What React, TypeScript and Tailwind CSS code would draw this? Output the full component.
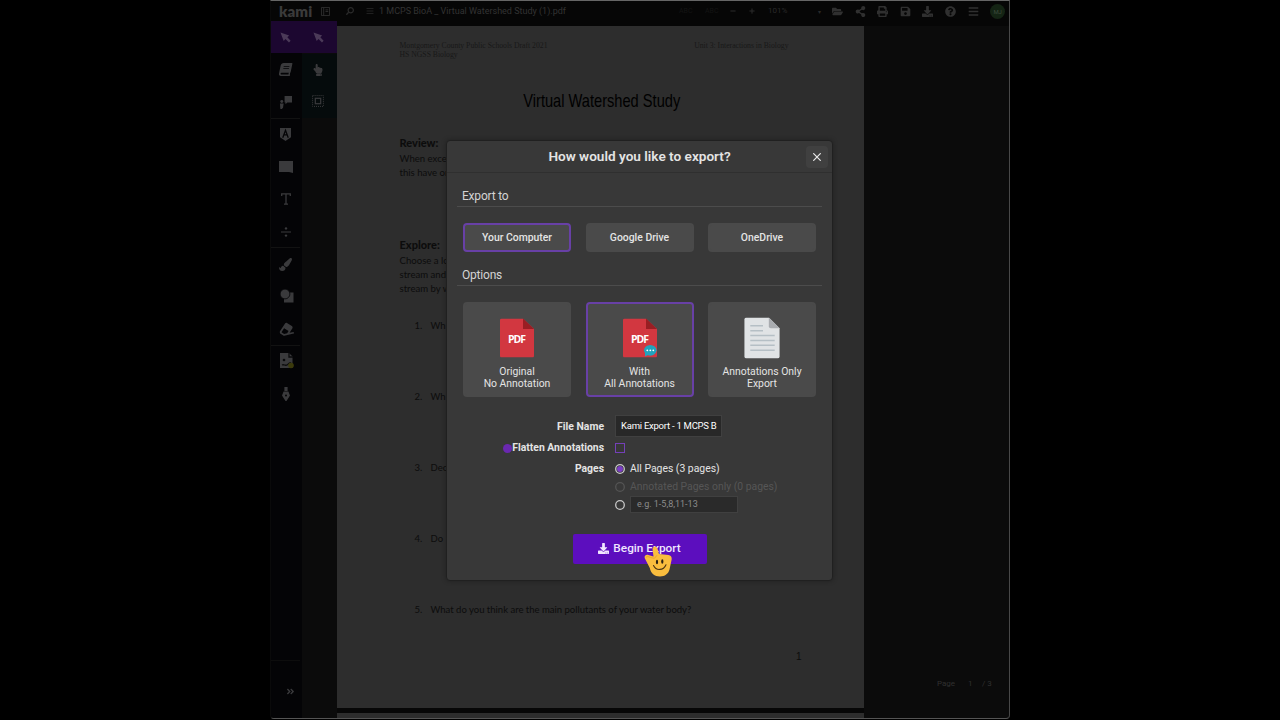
import React from "react";
import { FaShareAlt, FaPrint, FaSave, FaDownload, FaQuestionCircle, FaBars, FaFolderOpen, FaHandPointUp, FaBook, FaPaintBrush, FaEraser, FaAngleDoubleRight, FaMinus, FaPlus, FaSearch } from "react-icons/fa";

const Pointer: React.FC = () => (
 <svg viewBox="0 0 12 12" className="w-[11px] h-[11px]" fill="currentColor">
  <path d="M0.5 0.5 L10 3.8 L8 5.6 L11.6 9.6 L9.8 11.4 L6 7.6 L4 9.8 Z" />
 </svg>
);

const Comment: React.FC = () => (
 <svg viewBox="0 0 14 16" className="w-[13px] h-[15px]" fill="currentColor">
  <path d="M6 1h8v7H9l-2 2V8H6z" />
  <circle cx="3" cy="7" r="1.6" />
  <path d="M1 9h4l-.6 4-1.2 2H1.5z" />
 </svg>
);

const Markup: React.FC = () => (
 <svg viewBox="0 0 12 14" className="w-[11px] h-[13px]">
  <path d="M0 0h12v10l-6 4-6-4z" fill="currentColor" />
  <path d="M3 10.5 L6 2.5 L9 10.5 M4.2 7.5h3.6" stroke="#040406" strokeWidth="1.4" fill="none" />
 </svg>
);

const Note: React.FC = () => (
 <svg viewBox="0 0 14 12" className="w-[14px] h-3" fill="currentColor">
  <path d="M0 0h14v12l-4-1H0z" />
 </svg>
);

const TextTool: React.FC = () => (
 <svg viewBox="0 0 10 12" className="w-[10px] h-3" fill="none" stroke="currentColor" strokeWidth="1.3">
  <path d="M.7 3V.8h8.6V3M5 .8v10.4M3 11.2h4" />
 </svg>
);

const Equation: React.FC = () => (
 <svg viewBox="0 0 10 10" className="w-[10px] h-[10px]" fill="currentColor">
  <path d="M0 4.4h10v1.2H0z" />
  <circle cx="5" cy="1.4" r="1.2" />
  <circle cx="5" cy="8.6" r="1.2" />
 </svg>
);

const Shapes: React.FC = () => (
 <svg viewBox="0 0 14 14" className="w-[14px] h-[14px] translate-x-px" fill="currentColor">
  <path d="M9 3.5h4.5v10H4V9z" />
  <circle cx="5" cy="5" r="4.9" stroke="#040406" strokeWidth=".8" />
 </svg>
);

const Picture: React.FC = () => (
 <svg viewBox="0 0 14 16" className="w-[14px] h-4 translate-x-px">
  <path d="M0 0h9l3.5 3.5V15H0z" fill="currentColor" />
  <path d="M9 0v4h4M2 12c2-1 3 1 5 0s2-3 4-2" stroke="#0a0a0b" fill="none" strokeWidth="1.3" />
  <circle cx="4" cy="7" r="1.3" fill="#0a0a0b" />
  <circle cx="11" cy="12.5" r="2.8" fill="#3b3a0c" />
 </svg>
);

const Pen: React.FC = () => (
 <svg viewBox="0 0 8 14" className="w-2 h-[14px]" fill="currentColor">
  <path d="M2.4 0h3.2v4H2.4zM1.6 4.6h4.8L8 8.5 4.5 14h-1L0 8.5z" />
  <circle cx="4" cy="8.6" r="1" fill="#040406" />
 </svg>
);

const Marquee: React.FC = () => (
 <svg viewBox="0 0 12 12" className="w-3 h-3" fill="none" stroke="currentColor">
  <rect x=".6" y=".6" width="10.8" height="10.8" strokeDasharray="1 1" />
  <rect x="3.3" y="3.3" width="5.4" height="5.4" strokeWidth="1.2" />
 </svg>
);

const tools = [
 {icon: <FaBook size={13} className="-skew-x-12" />, rule: false},
 {icon: <Comment />, rule: true},
 {icon: <Markup />, rule: false},
 {icon: <Note />, rule: false},
 {icon: <TextTool />, rule: false},
 {icon: <Equation />, rule: true},
 {icon: <FaPaintBrush size={13} />, rule: false},
 {icon: <Shapes />, rule: false},
 {icon: <FaEraser size={14} className="-rotate-12" />, rule: true},
 {icon: <Picture />, rule: false},
 {icon: <Pen />, rule: false},
];

const actions = [FaFolderOpen, FaShareAlt, FaPrint, FaSave, FaDownload, FaQuestionCircle, FaBars];

const questions = [
 "Wh",
 "Wh",
 "Dec",
 "Do",
 "What do you think are the main pollutants of your water body?",
];

const TopBar: React.FC = () => (
 <header className="flex items-center h-[25px] pl-2 pb-[5px] bg-[#060606] text-[#303030] shrink-0">
  <span className="w-[34px] text-[15px] leading-none font-extrabold font-['Lato'] tracking-[0.1px] text-[#3a3a3a]">kami</span>
  <svg viewBox="0 0 10 10" className="w-[9px] h-[9px] ml-2" fill="none" stroke="currentColor">
   <path d="M.5 .5h9v9h-9zM3 .5v9M5 3.2h3M5 5h3" />
  </svg>
  <FaSearch size={8} className="ml-[16px] -scale-x-100 text-[#2a2a2a]" />
  <FaBars size={8} className="ml-3 text-[#202020]" />
  <span className="ml-[5px] w-[190px] whitespace-pre text-[9px] leading-none text-[#333]">1 MCPS BioA _ Virtual Watershed Study (1).pdf</span>
  <div className="flex items-center ml-[110px] w-[142px] text-[#2a2a2a]">
   <span className="w-[26px] text-[7px] text-[#141414]">ABC</span>
   <span className="w-[25px] text-[7px] text-[#141414]">ABC</span>
   <FaMinus size={6} />
   <FaPlus size={6} className="ml-[13px]" />
   <span className="ml-[13px] text-[8px]">101%</span>
   <span className="ml-auto text-[6px]">▾</span>
  </div>
  <div className="flex items-center ml-[11px] gap-[11.6px]">
   {actions.map((Icon, index) => (
    <Icon key={index} size={11} />
   ))}
   <span className="flex items-center justify-center w-[15px] h-[15px] rounded-full bg-[#142414] text-[6px] text-[#3d4a3d]">MJ</span>
  </div>
 </header>
);

const Sidebar: React.FC = () => (
 <aside className="flex w-[66px] shrink-0 text-[#3a3a3c]">
  <div className="flex flex-col w-[31px] pr-[2px] bg-[#040406]">
   <div className="flex items-center justify-center h-8 -mt-[5px] mb-px -mr-[2px] pr-[2px] bg-[#1c0730] text-[#4b3a58]"><Pointer /></div>
   {tools.map((tool, index) => (
    <div key={index} className={`flex items-center justify-center h-[32.4px] border-b ${tool.rule ? "border-[#121212]" : "border-transparent"}`}>
     {tool.icon}
    </div>
   ))}
   <div className="mt-auto flex items-center justify-center h-[43px] pl-2.5 pb-[14px] box-content border-t border-[#0d0d0d]">
    <FaAngleDoubleRight size={9} className="mt-[17px]" />
   </div>
  </div>
  <div className="flex flex-col w-[35px] bg-[#0b0b0b]">
   <div className="flex items-center justify-center h-8 -mt-[5px] mb-px pr-[3px] bg-[#1c0730] text-[#4b3a58]"><Pointer /></div>
   <div className="flex flex-col items-center h-[64px] bg-[#050b0c] pr-[3px]">
    <div className="flex items-center h-8"><FaHandPointUp size={12} /></div>
    <div className="flex items-center h-8 pb-0.5"><Marquee /></div>
   </div>
  </div>
 </aside>
);

const Document: React.FC = () => (
 <div className="flex flex-col w-[527px] shrink-0">
  <article className="h-[682px] bg-[#2d2d2d] px-[62.5px] font-['Lato',sans-serif] text-[#0c0c0c]">
   <div className="flex justify-between pt-[15px] pr-[13px] font-['Liberation_Serif',serif] text-[7.7px] leading-[9px] text-[#181818]">
    <p>Montgomery County Public Schools Draft 2021<br />HS NGSS Biology</p>
    <p className="whitespace-nowrap">Unit 3: Interactions in Biology</p>
   </div>
   <h1 className="mt-[30px] pl-0.5 text-center text-[19px] leading-6 whitespace-nowrap scale-x-[.77] font-['Liberation_Sans',sans-serif] text-black">Virtual Watershed Study</h1>
   <h2 className="mt-[23px] text-[11px] leading-[14px] font-black">Review:</h2>
   <p className="mt-[2px] text-[9.6px] leading-[14.3px]">When exce<br />this have or</p>
   <h2 className="mt-[57px] text-[11px] leading-[14px] font-black">Explore:</h2>
   <p className="mt-[2px] text-[9.6px] leading-[14.3px]">Choose a lo<br />stream and<br />stream by w</p>
   <ol className="mt-[23px] pl-[15px] text-[9.5px]">
    {questions.map((question, index) => (
     <li key={index} className="flex h-[71px] leading-[14px]">
      <span className="w-4">{index + 1}.</span>
      <span className="whitespace-nowrap">{question}</span>
     </li>
    ))}
   </ol>
   <p className="-mt-6 text-right text-[10px] leading-[14px] font-['Liberation_Sans',sans-serif]">1</p>
  </article>
  <div className="h-[5px] bg-[#070707]" />
  <div className="grow bg-[#2d2d2d]" />
 </div>
);

const PdfIcon: React.FC<{annotated?: boolean}> = ({annotated}) => (
 <svg viewBox="0 0 34 39" className="w-[34px] h-[39px]">
  <path d="M1.5 0H23l11 10.5V37.5a1.5 1.5 0 0 1-1.5 1.5h-31A1.5 1.5 0 0 1 0 37.5v-36A1.5 1.5 0 0 1 1.5 0z" fill="#d23740" />
  <path d="M23 0l11 10.5H23z" fill="#991e23" />
  <text x="17" y="24.4" textAnchor="middle" fontSize="10.5" fontWeight="700" fontFamily="Open Sans, sans-serif" fill="#fff" textLength="18">PDF</text>
  {annotated && (
   <>
    <ellipse cx="27.3" cy="31.8" rx="6.3" ry="5.4" fill="#22a3bd" />
    <path d="M22 34v4l4-2z" fill="#22a3bd" />
    <g fill="#fff">
     <circle cx="24.3" cy="31.8" r=".9" />
     <circle cx="27.3" cy="31.8" r=".9" />
     <circle cx="30.3" cy="31.8" r=".9" />
    </g>
   </>
  )}
 </svg>
);

const NotesIcon: React.FC = () => (
 <svg viewBox="0 0 36 42" className="w-9 h-[41px]">
  <path d="M2 0h23l11 11v29a2 2 0 0 1-2 2H2a2 2 0 0 1-2-2V2a2 2 0 0 1 2-2z" fill="#e0e3e5" />
  <path d="M25 0l11 11H27a2 2 0 0 1-2-2z" fill="#a9acb0" />
  <path d="M6 8.5h13M6 13.5h13M6 18.5h25M6 23.5h25M6 28.5h25M6 33.5h25" stroke="#b5bfc5" strokeWidth="1.5" />
 </svg>
);

const targets = ["Your Computer", "Google Drive", "OneDrive"];

const options = [
 {icon: <PdfIcon />, lines: ["Original", "No Annotation"]},
 {icon: <PdfIcon annotated />, lines: ["With", "All Annotations"]},
 {icon: <NotesIcon />, lines: ["Annotations Only", "Export"]},
];

const Radio: React.FC<{checked?: boolean; disabled?: boolean}> = ({checked, disabled}) => (
 <svg viewBox="0 0 10 10" className="w-[10px] h-[10px] shrink-0">
  <circle cx="5" cy="5" r="4.3" fill="none" strokeWidth="1.3" stroke={disabled ? "#545454" : "#c8c8c8"} />
  {checked && <circle cx="5" cy="5" r="3" fill="#7a3cc4" />}
 </svg>
);

const HandCursor: React.FC = () => (
 <svg viewBox="0 0 28 32" className="absolute left-[197px] top-[404px] w-7 h-8">
  <path d="M8.5 4C8.8 1 12 .6 13 3L15 9l9.5 1.1c2.8.3 3.6 2.7 3 5.2l-2 9.3C24.4 29 21 31.5 16 31.5c-5.5 0-9.3-3.5-10.2-8.5L.9 13.4C-.2 10.8 2 9 4.4 10l5.1 1.6z" fill="#f9bd3e" />
  <path d="M2 12.5c1-1.5 2.5-.8 4.4 0l4 .8 2.6-3" stroke="#eda32a" fill="none" />
  <ellipse cx="13" cy="17" rx="1.1" ry="2.2" fill="#2b2113" />
  <ellipse cx="18.3" cy="16.5" rx="1.1" ry="2.2" fill="#2b2113" />
  <path d="M9.5 20.5c2.5 5.5 10 5.2 12.5-.8" stroke="#4a3413" strokeWidth="1.1" fill="none" strokeLinecap="round" />
 </svg>
);

const ExportDialog: React.FC = () => (
 <section className="absolute left-[446px] top-[140px] w-[387px] h-[441px] rounded-[4px] border border-[#202020] bg-[#383838] text-[#e4e4e4] shadow-[0_0_5px_rgba(0,0,0,0.3)]">
  <header className="relative flex items-center justify-center h-8 border-b border-[#2f2f2f]">
   <h2 className="text-[13.6px] font-semibold whitespace-nowrap">How would you like to export?</h2>
   <button className="absolute right-1 top-[5px] flex items-center justify-center w-[22px] h-[22px] rounded bg-[#404040]">
    <svg viewBox="0 0 8 8" className="w-2 h-2" stroke="#e8e8e8" strokeWidth="1.2"><path d="M.3 .3l7.4 7.4M7.7 .3L.3 7.7" /></svg>
   </button>
  </header>
  <div className="px-[10px]">
   <h3 className="h-[34px] pt-[14px] pl-[5px] border-b border-[#4c4c4c] text-[12px] leading-[18px] tracking-[-0.2px] text-[#d4d4d4]">Export to</h3>
   <div className="flex justify-between mt-4 px-[6px]">
    {targets.map((target, index) => (
     <button
      key={target}
      className={`flex items-center justify-center w-[108px] h-[29px] rounded-[4px] border-2 bg-[#4a4a4a] text-[10.4px] font-medium ${index === 0 ? "border-[#6840a6]" : "border-[#4a4a4a]"}`}
     >
      {target}
     </button>
    ))}
   </div>
   <h3 className="mt-[14px] h-5 pl-[5px] border-b border-[#4c4c4c] text-[12px] leading-[18px] tracking-[-0.2px] text-[#d4d4d4]">Options</h3>
   <div className="flex justify-between mt-4 px-[6px]">
    {options.map((option, index) => (
     <div
      key={index}
      className={`flex flex-col items-center w-[108px] h-[95px] rounded-[4px] border-2 bg-[#4a4a4a] ${index === 1 ? "border-[#6840a6]" : "border-[#4a4a4a]"}`}
     >
      <div className="flex items-center justify-center h-[42px] mt-3 translate-y-[0.5px]">{option.icon}</div>
      <p className="mt-[8px] text-center text-[10.4px] leading-[12px] whitespace-nowrap">{option.lines[0]}<br />{option.lines[1]}</p>
     </div>
    ))}
   </div>
  </div>
  <div className="grid grid-cols-[157px_1fr] gap-x-[11px] mt-[18px] text-[10.4px]">
   <label className="flex items-center justify-end h-[22px] pt-px font-bold">File Name</label>
   <div className="flex items-center w-[107px] h-[22px] pl-[5px] border border-[#404040] bg-[#282828] text-[9.5px] tracking-[-0.25px] text-white whitespace-nowrap">Kami Export - 1 MCPS B</div>
   <label className="flex items-center justify-end h-[22px] font-bold whitespace-nowrap"><span className="w-[9px] h-[9px] shrink-0 rounded-full bg-[#6a28b0]" />Flatten Annotations</label>
   <div className="flex items-center"><span className="w-[10px] h-[10px] border border-[#7440b8]" /></div>
   <label className="flex items-center justify-end h-[19px] font-bold">Pages</label>
   <div className="flex items-center gap-[5px]"><Radio checked />All Pages (3 pages)</div>
   <span />
   <div className="flex items-center gap-[5px] h-[17px] text-[#565656]"><Radio disabled />Annotated Pages only (0 pages)</div>
   <span />
   <div className="flex items-center gap-[5px] h-[19px]">
    <Radio />
    <span className="flex items-center w-[108px] h-[17px] pl-[6px] pt-px border border-[#404040] bg-[#2a2a2a] text-[9px] text-[#8c8c8c]">e.g. 1-5,8,11-13</span>
   </div>
  </div>
  <button className="flex items-center justify-center gap-1 w-[134px] h-[30px] mt-5 ml-[125.5px] pb-px rounded-[2px] bg-[#5c0ebe] text-[11.8px] font-medium text-[#f0e6ff]">
   <FaDownload size={11} />Begin Export
  </button>
  <HandCursor />
 </section>
);

export default function App() {
 return (
  <main className="relative w-[1280px] h-[720px] overflow-hidden bg-black font-['Roboto',sans-serif]">
   <div className="flex flex-col w-[740px] h-[719px] ml-[270px] overflow-hidden rounded-b-[4px] border border-t-[#666] border-r-[#484848] border-b-[#555] border-l-[#0a0a0a] bg-[#0b0b0b]">
    <TopBar />
    <div className="flex grow min-h-0">
     <Sidebar />
     <Document />
     <div className="flex items-end grow pb-[28px] pl-[73px] text-[8px] text-[#303030]">
      <span className="w-[31px]">Page</span>
      <span className="w-[14px]">1</span>
      <span>/ 3</span>
     </div>
    </div>
   </div>
   <ExportDialog />
  </main>
 );
}
